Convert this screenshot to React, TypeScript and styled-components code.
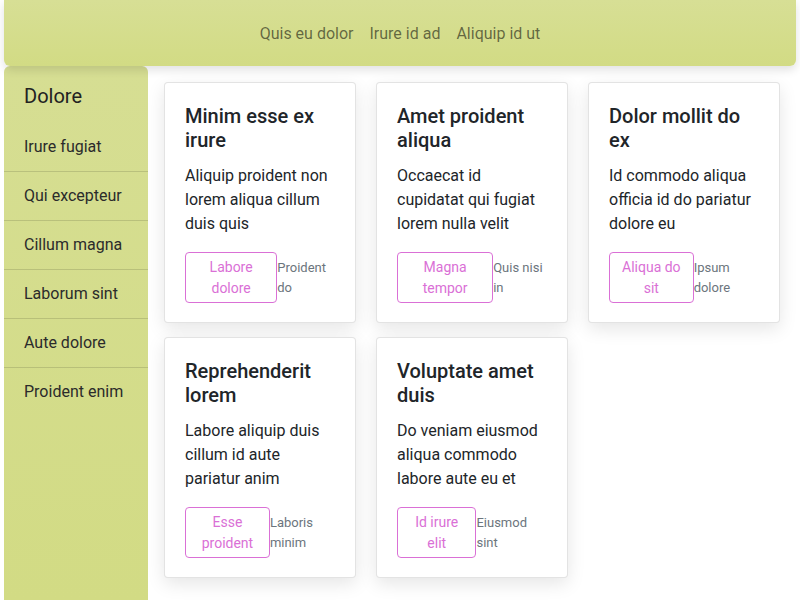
import React from "react";
import { styled, createGlobalStyle } from "styled-components";

const GlobalStyle = createGlobalStyle`
  html, body {
    margin: 0;
    padding: 0;
    background: #ffffff;
  }

  body {
    font-family: "Segoe UI", Roboto, "Liberation Sans", sans-serif;
    color: #212529;
  }

  * {
    box-sizing: border-box;
  }
`

const Page = styled.div`
  display: flex;
  flex-direction: column;
  min-height: 100vh;
  padding: 0 4px;
`

const Header = styled.header`
  position: relative;
  z-index: 2;
  height: 66px;
  padding-top: 2px;
  display: flex;
  align-items: center;
  justify-content: center;
  background: linear-gradient(180deg, #d7df95 0%, #d2db84 100%);
  border-radius: 0 0 6px 6px;
  box-shadow: 0 4px 10px rgba(0, 0, 0, 0.12);
`

const NavLink = styled.a`
  padding: 0 8px;
  font-size: 16px;
  line-height: 24px;
  color: rgba(0, 0, 0, 0.55);
  text-decoration: none;
`

const Body = styled.div`
  flex: 1;
  display: flex;
  align-items: stretch;
`

const Sidebar = styled.aside`
  width: 144px;
  flex-shrink: 0;
  padding-top: 18px;
  background: linear-gradient(180deg, #d6de93 0%, #d2db84 100%);
  border-radius: 6px 6px 0 0;
`

const SideTitle = styled.h4`
  margin: 0 0 15px;
  padding: 0 20px;
  font-size: 20px;
  font-weight: 400;
  line-height: 24px;
  color: #222;
`

const SideItem = styled.div`
  padding: 12px 20px;
  font-size: 16px;
  line-height: 24px;
  color: #2b2b2b;

  & + & {
    border-top: 1px solid rgba(0, 0, 0, 0.13);
  }
`

const Main = styled.main`
  flex: 1;
  padding: 16px;
  display: grid;
  grid-template-columns: repeat(3, 192px);
  column-gap: 20px;
  row-gap: 14px;
  align-content: start;
`

const Card = styled.div`
  background: #fff;
  border: 1px solid rgba(0, 0, 0, 0.11);
  border-radius: 4px;
  padding: 21px 20px 19px;
  box-shadow: 0 6px 18px rgba(0, 0, 0, 0.1);
`

const CardTitle = styled.h5`
  margin: 0 0 12px;
  font-size: 20px;
  font-weight: 500;
  line-height: 24px;
  color: #212529;
`

const CardText = styled.p`
  margin: 0 0 16px;
  font-size: 16px;
  line-height: 24px;
  color: #212529;
`

const Actions = styled.div`
  display: flex;
  align-items: center;
`

const OutlineButton = styled.button`
  padding: 3.5px 8px;
  font-family: inherit;
  font-size: 14px;
  line-height: 21px;
  color: #da70d6;
  background: transparent;
  border: 1px solid #da70d6;
  border-radius: 4px;
`

const Muted = styled.small`
  font-size: 13px;
  line-height: 20px;
  color: #6c757d;
`

const navLinks = ["Quis eu dolor", "Irure id ad", "Aliquip id ut"];

const sideItems = [
  "Irure fugiat",
  "Qui excepteur",
  "Cillum magna",
  "Laborum sint",
  "Aute dolore",
  "Proident enim",
];

const cards = [
  {
    title: "Minim esse ex irure",
    text: "Aliquip proident non lorem aliqua cillum duis quis",
    button: "Labore dolore",
    note: "Proident do",
  },
  {
    title: "Amet proident aliqua",
    text: "Occaecat id cupidatat qui fugiat lorem nulla velit",
    button: "Magna tempor",
    note: "Quis nisi in",
  },
  {
    title: "Dolor mollit do ex",
    text: "Id commodo aliqua officia id do pariatur dolore eu",
    button: "Aliqua do sit",
    note: "Ipsum dolore",
  },
  {
    title: "Reprehenderit lorem",
    text: "Labore aliquip duis cillum id aute pariatur anim",
    button: "Esse proident",
    note: "Laboris minim",
  },
  {
    title: "Voluptate amet duis",
    text: "Do veniam eiusmod aliqua commodo labore aute eu et",
    button: "Id irure elit",
    note: "Eiusmod sint",
  },
];

const App: React.FC = () => {
  return (
    <>
      <GlobalStyle />
      <Page>
        <Header>
          {navLinks.map((link) => (
            <NavLink key={link} href="#">{link}</NavLink>
          ))}
        </Header>
        <Body>
          <Sidebar>
            <SideTitle>Dolore</SideTitle>
            {sideItems.map((item) => (
              <SideItem key={item}>{item}</SideItem>
            ))}
          </Sidebar>
          <Main>
            {cards.map((card) => (
              <Card key={card.title}>
                <CardTitle>{card.title}</CardTitle>
                <CardText>{card.text}</CardText>
                <Actions>
                  <OutlineButton>{card.button}</OutlineButton>
                  <Muted>{card.note}</Muted>
                </Actions>
              </Card>
            ))}
          </Main>
        </Body>
      </Page>
    </>
  )
}

export default App
